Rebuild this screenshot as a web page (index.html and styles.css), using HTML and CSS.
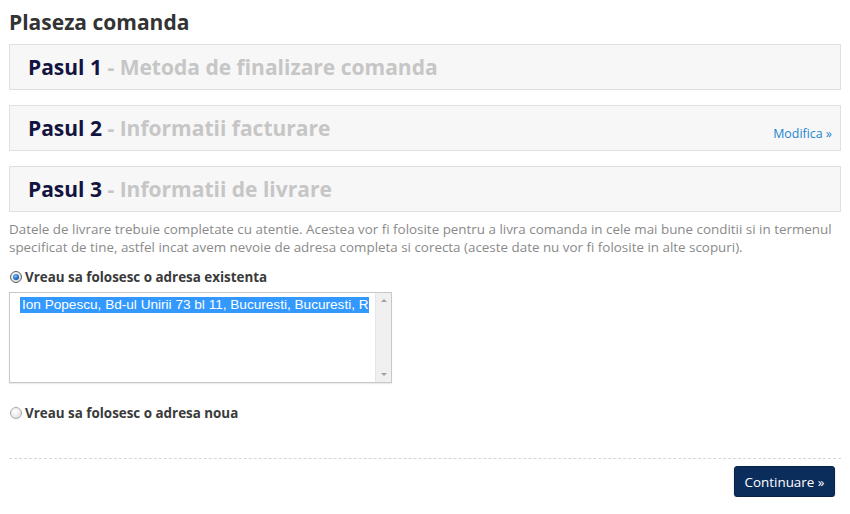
FILE: index.html
```html
<!DOCTYPE html>
<html lang="ro">
<head>
<meta charset="utf-8">
<title>Plaseza comanda</title>
<link rel="stylesheet" href="styles.css">
</head>
<body>
<div class="page">
  <h1 class="title">Plaseza comanda</h1>

  <div class="step">
    <h2 class="step-title"><span class="step-num">Pasul 1</span> <span class="step-name">- Metoda de finalizare comanda</span></h2>
  </div>

  <div class="step step-done">
    <h2 class="step-title"><span class="step-num">Pasul 2</span> <span class="step-name">- Informatii facturare</span></h2>
    <a class="step-edit" href="#">Modifica &raquo;</a>
  </div>

  <div class="step">
    <h2 class="step-title"><span class="step-num">Pasul 3</span> <span class="step-name">- Informatii de livrare</span></h2>
  </div>

  <p class="intro">Datele de livrare trebuie completate cu atentie. Acestea vor fi folosite pentru a livra comanda in cele mai bune conditii si in termenul specificat de tine, astfel incat avem nevoie de adresa completa si corecta (aceste date nu vor fi folosite in alte scopuri).</p>

  <label class="choice">
    <span class="radio checked"></span>
    <span class="choice-text">Vreau sa folosesc o adresa existenta</span>
  </label>

  <div class="listbox">
    <div class="listbox-items">
      <div class="option selected">Ion Popescu, Bd-ul Unirii 73 bl 11, Bucuresti, Bucuresti, R</div>
    </div>
    <div class="scrollbar">
      <span class="arrow up"></span>
      <span class="arrow down"></span>
    </div>
  </div>

  <label class="choice choice-new">
    <span class="radio"></span>
    <span class="choice-text">Vreau sa folosesc o adresa noua</span>
  </label>

  <div class="actions">
    <button class="btn-primary" type="button">Continuare &raquo;</button>
  </div>
</div>
</body>
</html>
```

FILE: styles.css
```css
html, body {
  margin: 0;
  padding: 0;
  background: #fff;
}

body {
  font-family: "Open Sans", "Liberation Sans", sans-serif;
  color: #333;
}

.page {
  width: 832px;
  padding: 0 9px;
}

.title {
  margin: 8px 0 0 0;
  font-size: 21px;
  line-height: 28px;
  font-weight: 700;
  color: #333;
  height: 36px;
}

.step {
  display: flex;
  justify-content: space-between;
  align-items: center;
  height: 44px;
  border: 1px solid #e0e0e0;
  background: #f7f7f7;
  padding: 0 8px 0 18px;
  margin-bottom: 15px;
  box-sizing: content-box;
  width: 804px;
}

.step-title {
  margin: 0;
  font-size: 21px;
  font-weight: 700;
  line-height: 28px;
}

.step-num {
  color: #13133f;
}

.step-name {
  color: #c6c6c6;
}

.step-done {
  align-items: stretch;
}

.step-done .step-title {
  align-self: center;
}

.step-edit {
  align-self: flex-end;
  padding-bottom: 8px;
  font-size: 12.4px;
  line-height: 16px;
  color: #1c86d0;
  text-decoration: none;
}

.intro {
  margin: -7px 0 0 0;
  font-size: 13.4px;
  line-height: 18px;
  color: #8a8a8a;
}

.choice {
  display: flex;
  align-items: center;
  gap: 3px;
  margin-top: 12px;
  font-size: 13.4px;
  line-height: 18px;
  font-weight: 700;
  color: #3a3a3a;
}

.radio {
  width: 12px;
  height: 12px;
  border-radius: 50%;
  border: 1px solid #a8a8a8;
  background: radial-gradient(circle at 40% 35%, #ffffff 0%, #ececec 55%, #cfcfcf 100%);
  box-sizing: border-box;
  display: inline-flex;
  align-items: center;
  justify-content: center;
  margin-left: 1px;
}

.radio.checked {
  border-color: #5e5e5e;
  background: radial-gradient(circle at 40% 35%, #ffffff 0%, #dcdcdc 70%, #b8b8b8 100%);
}

.radio.checked::after {
  content: "";
  width: 6px;
  height: 6px;
  border-radius: 50%;
  background: radial-gradient(circle at 40% 35%, #7cc4ff 0%, #1f6cc0 55%, #0c3a78 100%);
}

.listbox {
  display: flex;
  margin-top: 6px;
  width: 383px;
  height: 91px;
  border: 1px solid #c8c8c8;
  box-sizing: border-box;
  background: #fff;
  box-shadow: 0 1px 1px rgba(0, 0, 0, 0.08);
}

.listbox-items {
  flex: 1;
  min-width: 0;
  padding: 4px 0 0 10px;
  overflow: hidden;
}

.option {
  font-family: "Liberation Sans", Arial, sans-serif;
  font-size: 13.6px;
  line-height: 16px;
  white-space: nowrap;
  overflow: hidden;
  padding-left: 2px;
}

.option.selected {
  background: #3399ff;
  color: #fff;
}

.scrollbar {
  width: 15px;
  margin-left: 6px;
  background: #f0f0f0;
  border-left: 1px solid #e6e6e6;
  display: flex;
  flex-direction: column;
  justify-content: space-between;
  align-items: center;
  padding: 6px 0 6px 0;
}

.arrow {
  width: 0;
  height: 0;
  border-left: 3px solid transparent;
  border-right: 3px solid transparent;
}

.arrow.up {
  border-bottom: 3px solid #a0a0a0;
}

.arrow.down {
  border-top: 3px solid #a0a0a0;
}

.choice-new {
  margin-top: 21px;
}

.actions {
  margin-top: 36px;
  border-top: 1px dashed #d6d6d6;
  padding-top: 7px;
  display: flex;
  justify-content: flex-end;
  padding-right: 6px;
}

.btn-primary {
  font-family: "Open Sans", "Liberation Sans", sans-serif;
  font-size: 13.4px;
  line-height: 18px;
  color: #fff;
  background: #0b2d5c;
  border: 1px solid #082248;
  border-radius: 3px;
  width: 101px;
  height: 31px;
  padding: 0;
  box-shadow: 0 1px 2px rgba(0, 0, 0, 0.2);
  cursor: pointer;
}
```
